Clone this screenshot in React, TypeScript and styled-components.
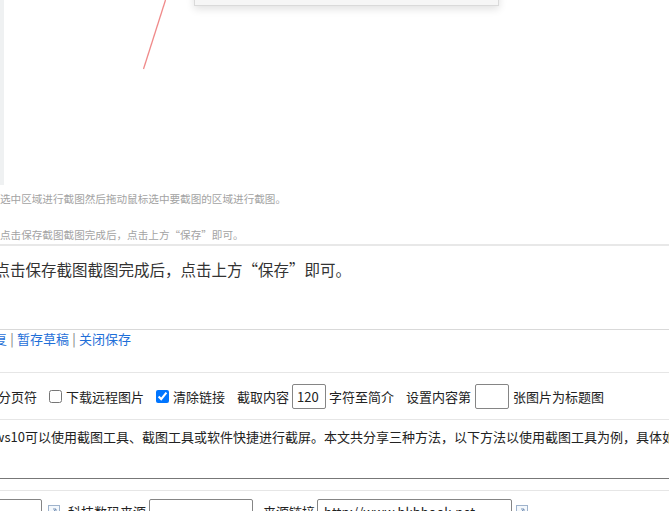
import React from "react";
import styled, { createGlobalStyle } from "styled-components";

const Global = createGlobalStyle`
  html, body { margin: 0; padding: 0; background: #fff; overflow: hidden; }
  body { font-family: "Microsoft YaHei", "Noto Sans CJK SC", sans-serif; color: #333; }
  * { box-sizing: border-box; }
`;

const Page = styled.div`
  width: 669px;
  height: 511px;
  overflow: hidden;
  white-space: nowrap;
`;

/* embedded screenshot inside the article */
const Shot = styled.div`
  height: 246px;
  border-bottom: 2px solid #e8e8e8;
`;

const ShotCanvas = styled.div`
  position: relative;
  height: 185px;
  border-left: 4px solid #eff1f2;
  overflow: hidden;
`;

const Dialog = styled.div`
  position: absolute;
  left: 190px;
  top: -40px;
  width: 305px;
  height: 46px;
  background: #f6f6f6;
  border: 1px solid #dadada;
  box-shadow: 0 3px 8px rgba(0, 0, 0, 0.12);
`;

const Pointer = styled.svg`
  position: absolute;
  left: 0;
  top: 0;
`;

const Caption = styled.p<{ $gap: number }>`
  margin: ${(p) => p.$gap}px 0 0 0;
  font-size: 10.6px;
  line-height: 16px;
  color: #a3a3a3;
`;

const EditorBody = styled.div`
  height: 84px;
  padding-top: 11px;
  border-bottom: 1px solid #d9d9d9;
`;

const Para = styled.p`
  margin: 0 0 0 -5.5px;
  font-size: 15.5px;
  line-height: 24px;
  color: #333;
`;

const LinkRow = styled.div`
  display: flex;
  align-items: center;
  height: 43px;
  padding-bottom: 25px;
  margin-left: -6px;
  border-bottom: 1px solid #e6e6e6;
  font-size: 13px;
`;

const ActLink = styled.a`
  color: #1f6fd8;
  text-decoration: none;
  line-height: 18px;
`;

const Sep = styled.span`
  color: #7a7a7a;
  margin: 0 3px;
  width: 4px;
  text-align: center;
  line-height: 18px;
`;

const OptionsRow = styled.div`
  display: flex;
  align-items: center;
  gap: 12px;
  height: 47px;
  margin-left: -2px;
  border-bottom: 1px solid #e6e6e6;
  font-size: 13px;
  color: #222;
`;

const Group = styled.label<{ $gap: number }>`
  display: flex;
  align-items: center;
  gap: ${(p) => p.$gap}px;
`;

const Check = styled.input`
  width: 13px;
  height: 13px;
  margin: 0;
  accent-color: #0075ff;
`;

const SmallInput = styled.input`
  width: 34px;
  height: 25px;
  padding: 0 4px;
  border: 1px solid #858585;
  border-radius: 2px;
  font-family: inherit;
  font-size: 13px;
  color: #222;
  background: #fff;
`;

const TextRow = styled.div`
  height: 71px;
  border-bottom: 1px solid #e6e6e6;
`;

const Summary = styled.textarea`
  display: block;
  width: 1400px;
  height: 59px;
  margin-left: -6px;
  padding: 8px 0 0 0;
  border: none;
  border-bottom: 1px solid #777;
  resize: none;
  overflow: hidden;
  outline: none;
  font-family: "Microsoft YaHei", "Noto Sans CJK SC", sans-serif;
  font-size: 13px;
  line-height: 18px;
  color: #222;
  background: #fff;
`;

const FieldRow = styled.div`
  display: flex;
  align-items: center;
  padding-top: 8px;
  font-size: 13px;
  color: #222;
`;

const TextInput = styled.input<{ $w: number; $ml: number }>`
  width: ${(p) => p.$w}px;
  height: 24px;
  margin-left: ${(p) => p.$ml}px;
  padding: 0 6px;
  border: 1px solid #858585;
  border-radius: 2px;
  font-family: inherit;
  font-size: 13px;
  color: #222;
  background: #fff;
  flex: none;
`;

const FieldLabel = styled.span<{ $ml: number }>`
  margin-left: ${(p) => p.$ml}px;
`;

const PickIcon = styled.svg<{ $ml: number }>`
  margin-left: ${(p) => p.$ml}px;
  flex: none;
`;

function Picker({ ml }: { ml: number }) {
  return (
    <PickIcon $ml={ml} width="12" height="12" viewBox="0 0 12 12">
      <rect x="0.5" y="0.5" width="11" height="11" fill="#f4f8fc" stroke="#9fb3cc" />
      <path d="M4 8 L8 4 M5 4 H8 V7" fill="none" stroke="#7b95b8" strokeWidth="1" />
    </PickIcon>
  );
}

export default function App() {
  return (
    <Page>
      <Global />
      <Shot>
        <ShotCanvas>
          <Dialog />
          <Pointer width="400" height="185">
            <line x1="161.5" y1="0" x2="139.5" y2="69" stroke="#f08a8a" strokeWidth="1.3" />
          </Pointer>
        </ShotCanvas>
        <Caption $gap={6}>选中区域进行截图然后拖动鼠标选中要截图的区域进行截图。</Caption>
        <Caption $gap={20}>点击保存截图截图完成后，点击上方“保存”即可。</Caption>
      </Shot>

      <EditorBody>
        <Para>点击保存截图截图完成后，点击上方“保存”即可。</Para>
      </EditorBody>

      <LinkRow>
        <ActLink href="#">复</ActLink>
        <Sep>|</Sep>
        <ActLink href="#">暂存草稿</ActLink>
        <Sep>|</Sep>
        <ActLink href="#">关闭保存</ActLink>
      </LinkRow>

      <OptionsRow>
        <span>分页符</span>
        <Group $gap={4}>
          <Check type="checkbox" />
          <span>下载远程图片</span>
        </Group>
        <Group $gap={4}>
          <Check type="checkbox" defaultChecked />
          <span>清除链接</span>
        </Group>
        <Group $gap={3}>
          <span>截取内容</span>
          <SmallInput defaultValue="120" />
          <span>字符至简介</span>
        </Group>
        <Group $gap={4}>
          <span>设置内容第</span>
          <SmallInput defaultValue="" />
          <span>张图片为标题图</span>
        </Group>
      </OptionsRow>

      <TextRow>
        <Summary
          wrap="off"
          readOnly
          defaultValue="ws10可以使用截图工具、截图工具或软件快捷进行截屏。本文共分享三种方法，以下方法以使用截图工具为例，具体如下："
        />
      </TextRow>

      <FieldRow>
        <TextInput $w={120} $ml={-78} defaultValue="" />
        <Picker ml={6} />
        <FieldLabel $ml={8}>科技数码来源</FieldLabel>
        <TextInput $w={104} $ml={3} defaultValue="" />
        <FieldLabel $ml={10}>来源链接</FieldLabel>
        <TextInput $w={195} $ml={2} defaultValue="http://www.hkbhook.net" />
        <Picker ml={4} />
      </FieldRow>
    </Page>
  );
}
